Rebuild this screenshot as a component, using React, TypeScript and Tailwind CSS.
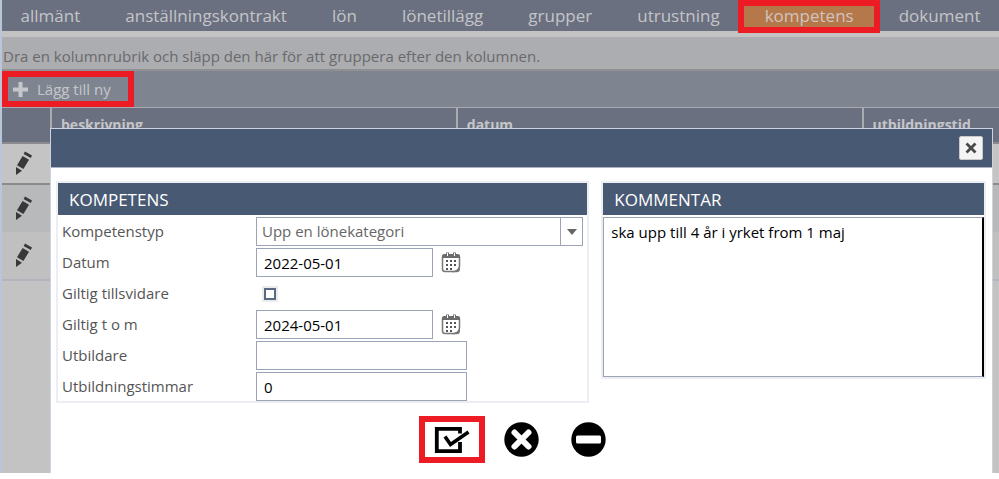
import { useState } from "react";

const tabs = [
  "allmänt",
  "anställningskontrakt",
  "lön",
  "lönetillägg",
  "grupper",
  "utrustning",
  "kompetens",
  "dokument",
];

const rowStyles = [
  "h-[41px] border-b-2 border-[#8b8b8d] bg-[#c4c4c4]",
  "h-[48px] bg-[#b7b9bb]",
  "h-[48px] border-b-2 border-[#b3b5bc] bg-[#c0c0c0]",
];

const inputStyle =
  "h-[29px] border border-[#9ba4b7] bg-white px-[7px] text-[15px] text-black outline-none";

const PencilIcon = () => (
  <svg width="18" height="25" viewBox="0 0 18 25" fill="#383838">
    <path d="M10 0.5 L17 4.5 L15.8 7 L8.6 3 Z" />
    <path d="M7.6 5 L14 8.8 L8.4 18 L2 14.2 Z" />
    <path d="M1 16 L7 19.8 L1 24 Z" />
  </svg>
);

const CalendarIcon = () => (
  <svg width="20" height="21" viewBox="0 0 20 21">
    <path
      d="M4 3 H16 Q18.5 3 18.5 5.5 V14 Q18 19 13 19.5 H4 Q1.5 19.5 1.5 17 V5.5 Q1.5 3 4 3 Z"
      fill="white"
      stroke="#777"
      strokeWidth="1.5"
    />
    <path d="M1 6 V4 Q1 2 3.5 2 H16.5 Q19 2 19 4 V6 Z" fill="#6c6c6c" />
    <path d="M19 13 V17 Q19 20.2 15.5 20.2 H11 Q17 18.5 19 13 Z" fill="#777" />
    <path d="M5 0.5 H8 V3 H5 Z M12 0.5 H15 V3 H12 Z" fill="#6c6c6c" />
    <path d="M6 1 H7 V4 H6 Z M13 1 H14 V4 H13 Z" fill="white" />
    <path
      d="M5 8h2v2h-2z M9 8h2v2h-2z M13 8h2v2h-2z M5 12h2v2h-2z M9 12h2v2h-2z M13 12h2v2h-2z M5 16h2v2h-2z M9 16h2v2h-2z"
      fill="#555"
    />
  </svg>
);

const SaveIcon = () => (
  <svg width="36" height="28" viewBox="0 0 36 28" fill="none" stroke="black">
    <path d="M26 7.5 V2.8 H2.8 V25.2 H26 V16" strokeWidth="3.8" />
    <path d="M11 10.5 L16.5 18.5 L34.5 6" strokeWidth="3.6" />
  </svg>
);

const CancelIcon = () => (
  <svg width="35" height="35" viewBox="0 0 35 35">
    <circle cx="17.5" cy="17.5" r="17.2" />
    <path
      d="M10.5 10.5 L24.5 24.5 M24.5 10.5 L10.5 24.5"
      stroke="white"
      strokeWidth="6"
      strokeLinecap="round"
    />
  </svg>
);

const RemoveIcon = () => (
  <svg width="35" height="35" viewBox="0 0 35 35">
    <circle cx="17.5" cy="17.5" r="17.2" />
    <rect x="5" y="13.5" width="25" height="8" rx="1.5" fill="white" />
  </svg>
);

const DateField = ({ id, value }: { id: string; value: string }) => (
  <div className="flex items-center gap-2">
    <input id={id} defaultValue={value} className={`${inputStyle} w-[177px]`} />
    <button type="button" aria-label="Kalender">
      <CalendarIcon />
    </button>
  </div>
);

const CompetenceDialog = () => {
  const [forever, setForever] = useState(false);

  return (
    <div
      role="dialog"
      className="absolute top-32 right-[6px] bottom-0 left-12 border border-b-0 border-[#ccd4e0] bg-white"
    >
      <div className="flex h-[39px] items-center justify-end border-b border-[#aab4c6] bg-[#485973] pr-[9px]">
        <button
          type="button"
          aria-label="Stäng"
          className="flex size-6 items-center justify-center rounded-[2px] border border-[#c9c9c9] bg-[#f4f4f4]"
        >
          <svg width="12" height="12" viewBox="0 0 12 12" stroke="#484848">
            <path d="M1.5 1.5 L10.5 10.5 M10.5 1.5 L1.5 10.5" strokeWidth="2.8" />
          </svg>
        </button>
      </div>

      <form>
        <div className="mt-[13px] flex items-start gap-3 pr-[6px] pl-[5px]">
          <section className="min-w-0 flex-[534] border-2 border-[#eceef3]">
            <h2 className="h-8 bg-[#485973] px-[11px] text-[17px] leading-[34px] text-white">
              KOMPETENS
            </h2>
            <div className="mt-[2px] grid grid-cols-[194px_1fr] auto-rows-[29px] items-center gap-y-[2px] pr-1 pl-1 text-[15px] text-[#555]">
              <label htmlFor="type">Kompetenstyp</label>
              <div className="relative">
                <select
                  id="type"
                  className="block h-[29px] w-full appearance-none border border-[#9ba4b7] bg-white px-[5px] text-[15px] text-[#666] outline-none"
                >
                  <option>Upp en lönekategori</option>
                </select>
                <span className="pointer-events-none absolute inset-y-0 right-0 flex w-[23px] items-center justify-center border border-[#9ba4b7]">
                  <svg width="10" height="6" viewBox="0 0 10 6" fill="#666">
                    <path d="M0 0 H10 L5 6 Z" />
                  </svg>
                </span>
              </div>

              <label htmlFor="date">Datum</label>
              <DateField id="date" value="2022-05-01" />

              <label htmlFor="forever">Giltig tillsvidare</label>
              <input
                id="forever"
                type="checkbox"
                checked={forever}
                onChange={(e) => setForever(e.target.checked)}
                className="ml-2 size-3 appearance-none border-2 border-[#5c6b84] outline-2 outline-[#ececec] checked:bg-[#485973]"
              />

              <label htmlFor="until">Giltig t o m</label>
              <DateField id="until" value="2024-05-01" />

              <label htmlFor="teacher">Utbildare</label>
              <input id="teacher" className={`${inputStyle} w-[211px]`} />

              <label htmlFor="hours">Utbildningstimmar</label>
              <input
                id="hours"
                defaultValue="0"
                className={`${inputStyle} w-[211px]`}
              />
            </div>
          </section>

          <section className="min-w-0 flex-[384] border-2 border-[#eceef3]">
            <h2 className="h-8 bg-[#485973] px-[11px] text-[17px] leading-[34px] text-white">
              <label htmlFor="comment">KOMMENTAR</label>
            </h2>
            <textarea
              id="comment"
              defaultValue="ska upp till 4 år i yrket from 1 maj"
              className="mt-[2px] block h-40 w-full resize-none border border-r-2 border-[#9ba4b7] border-r-black px-[7px] py-1 text-[15px] leading-5 text-black outline-none"
            />
          </section>
        </div>

        <div className="mt-[13px] flex items-center justify-center gap-[19px] pr-[18px]">
          <button
            type="button"
            aria-label="Spara"
            className="flex h-[47px] w-[66px] items-center justify-center border-[6px] border-[#ed1c24]"
          >
            <SaveIcon />
          </button>
          <button type="button" aria-label="Avbryt">
            <CancelIcon />
          </button>
          <button type="button" aria-label="Ta bort" className="ml-[13px]">
            <RemoveIcon />
          </button>
        </div>
      </form>
    </div>
  );
};

const App = () => {
  return (
    <div className="h-screen bg-white pb-[6px] font-['Open_Sans','Noto_Sans',sans-serif]">
      <main className="relative h-full overflow-hidden border-l-2 border-[#b9c6da] bg-[#c3c3c3]">
        <nav className="h-[31px] bg-[#6a7080]">
          <div className="-mx-1 flex h-full">
            {tabs.map((tab) => (
              <a
                key={tab}
                href="#"
                className={`relative flex-auto text-center text-[17px] leading-8 font-medium ${
                  tab === "kompetens"
                    ? "bg-[#b4784a] text-[#d0c4c0]"
                    : "text-[#c4c5c8]"
                }`}
              >
                {tab}
                {tab === "kompetens" && (
                  <span className="absolute -inset-x-1 top-0 z-10 h-[33px] border-[6px] border-[#ed1c24]" />
                )}
              </a>
            ))}
          </div>
        </nav>

        <p className="mt-[6px] h-[34px] border-b-2 border-[#8f9092] bg-[#acadb0] pl-[1px] text-[15px] leading-[38px] text-[#6a6a6c]">
          Dra en kolumnrubrik och släpp den här för att gruppera efter den
          kolumnen.
        </p>

        <div className="h-9 bg-[#7f8590]">
          <button
            type="button"
            className="relative flex h-9 w-[132px] items-center gap-[9px] border-[6px] border-[#ed1c24] pl-[5px] text-[15px] font-medium text-[#c6c7ca]"
          >
            <svg width="15" height="15" viewBox="0 0 15 15" fill="#c6c7ca">
              <path d="M5.5 0 H9.5 V5.5 H15 V9.5 H9.5 V15 H5.5 V9.5 H0 V5.5 H5.5 Z" />
            </svg>
            Lägg till ny
          </button>
        </div>

        <table className="w-full table-fixed border-collapse">
          <colgroup>
            <col className="w-[49px]" />
            <col className="w-[40.7%]" />
            <col className="w-[40.7%]" />
            <col />
          </colgroup>
          <thead>
            <tr className="h-[35px] border-t border-b-2 border-t-[#a9abb0] border-b-[#8b8b8d] bg-[#6a7080] text-left text-[14px] font-semibold text-[#c4c5c8]">
              <th aria-label="Redigera" />
              <th className="border-l-2 border-[#a9abb0] pl-[9px]">
                beskrivning
              </th>
              <th className="border-l-2 border-[#a9abb0] pl-[9px]">datum</th>
              <th className="border-l-2 border-[#a9abb0] pl-[9px]">
                utbildningstid
              </th>
            </tr>
          </thead>
          <tbody>
            {rowStyles.map((style) => (
              <tr key={style} className={style}>
                <td>
                  <button
                    type="button"
                    aria-label="Redigera"
                    className="ml-[13px] block"
                  >
                    <PencilIcon />
                  </button>
                </td>
                <td colSpan={3} />
              </tr>
            ))}
          </tbody>
        </table>

        <CompetenceDialog />
      </main>
    </div>
  );
};

export default App;
